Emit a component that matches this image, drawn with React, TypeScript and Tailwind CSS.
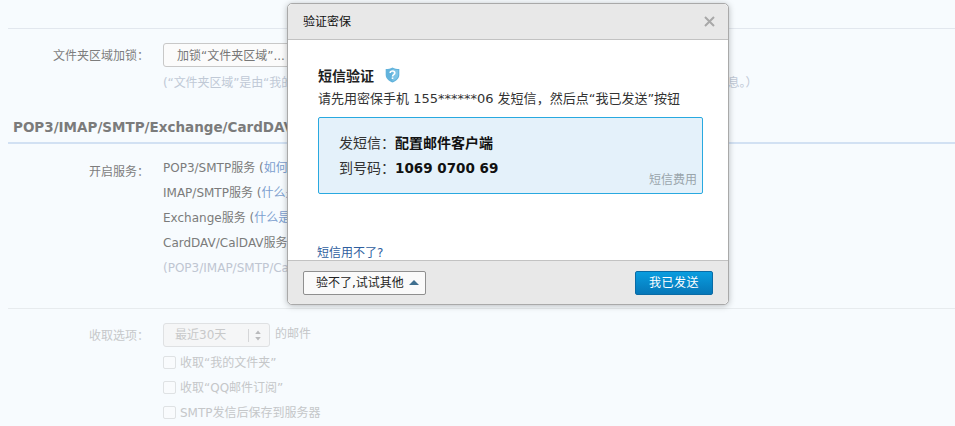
import React from "react";

const font = "font-['DejaVu_Sans','Noto_Sans_CJK_SC',sans-serif]";
const C = "\uFF1A";
const D = "\uFF0C";
const R = "\uFF09";

function Shield() {
  return (
    <svg width="15" height="16" viewBox="0 0 15 16" className="ml-[11px] -mt-[2px]">
      <path d="M7.5 0.5 C9.5 1.6 11.8 2 14.3 2 L14.3 8 C14.3 11.6 11 14.2 7.5 15.6 C4 14.2 0.7 11.6 0.7 8 L0.7 2 C3.2 2 5.5 1.6 7.5 0.5 Z" fill="#62b3dc" />
      <path d="M7.5 1.8 C9.3 2.7 11.3 3 13.2 3.1 L13.2 8 C13.2 10.8 10.4 13 7.5 14.3 Z" fill="#8accea" opacity="0.7" />
      <path d="M5.2 6 C5.2 3.4 9.8 3.4 9.8 6 C9.8 7.6 7.5 7.6 7.5 9.4" fill="none" stroke="#ffffff" strokeWidth="1.6" />
      <rect x="6.7" y="10.4" width="1.6" height="1.6" fill="#ffffff" />
    </svg>
  );
}

function Check({ label }: { label: string }) {
  return (
    <div className="flex h-[25px] items-center">
      <span className="h-[13px] w-[13px] rounded-[2px] border border-[#dfe2e4] bg-[#f9fbfd]" />
      <span className="ml-[4px] text-[12px] text-[#c5c7c9]">{label}</span>
    </div>
  );
}

export default function App() {
  return (
    <div className={`${font} relative h-[426px] w-[955px] overflow-hidden bg-[#f7fbfe]`}>
      <div className="ml-2 pt-[28px]">
        <div className="h-px bg-[#e2e7ee]" />

        <div className="flex pt-[14px]">
          <div className="w-[141px] pt-[4px] text-right text-[12px] leading-[18px] text-[#7d7d7d]">文件夹区域加锁{C}</div>
          <div className="ml-[14px]">
            <div className="flex h-[24px] w-[160px] items-center rounded-[3px] border border-[#c8c8c8] bg-[#fbfbfb] pl-[13px] pt-[1px] text-[12px] text-[#777777]">加锁“文件夹区域”...</div>
            <div className="mt-[7px] whitespace-nowrap text-[12px] leading-[18px] tracking-[-0.1px] text-[#c0c9d6]">
              (“文件夹区域”是由“我的文件夹”中所有文件夹组成的区域{D}加锁后{D}打开区域需输入独立密码{D}保护邮件信息。{R}
            </div>
          </div>
        </div>

        <div className="mt-[25px] pl-[5px] text-[13.5px] font-bold leading-[20px] text-[#7b7b7b]">POP3/IMAP/SMTP/Exchange/CardDAV/CalDAV服务</div>
        <div className="mt-[5px] h-[2px] bg-[#d2e1f3]" />

        <div className="flex pt-[12px]">
          <div className="w-[141px] pt-[7px] text-right text-[12px] leading-[18px] text-[#7d7d7d]">开启服务{C}</div>
          <div className="ml-[14px] whitespace-nowrap text-[12px] leading-[25px] text-[#7b7b7b]">
            <div>POP3/SMTP服务 (<span className="text-[#7d9fcf]">如何使用</span>)</div>
            <div>IMAP/SMTP服务 (<span className="text-[#7d9fcf]">什么是</span>)</div>
            <div>Exchange服务 (<span className="text-[#7d9fcf]">什么是</span>)</div>
            <div>CardDAV/CalDAV服务</div>
            <div className="text-[#bfc6d2]">(POP3/IMAP/SMTP/CardDAV)</div>
          </div>
        </div>

        <div className="mt-[27px] h-px bg-[#e7ebee]" />

        <div className="flex pt-[14px]">
          <div className="w-[141px] pt-[4px] text-right text-[12px] leading-[18px] text-[#c6c8ca]">收取选项{C}</div>
          <div className="ml-[14px]">
            <div className="flex items-center">
              <div className="flex h-[24px] w-[107px] items-center rounded-[3px] border border-[#dfe1e3] bg-[#f5f6f7] pl-[11px] text-[12px] text-[#c8c9ca]">
                <span className="w-[73px]">最近30天</span>
                <span className="h-[13px] w-px bg-[#d5d6d8]" />
                <svg width="6" height="11" viewBox="0 0 6 11" className="ml-[6px]">
                  <path d="M3 0.5 L5.8 4 L0.2 4 Z M3 10.5 L5.8 7 L0.2 7 Z" fill="#b9babc" />
                </svg>
              </div>
              <span className="ml-[5px] -mt-[3px] text-[12px] text-[#c5c7c9]">的邮件</span>
            </div>
            <div className="mt-[3px]">
              <Check label="收取“我的文件夹”" />
              <Check label="收取“QQ邮件订阅”" />
              <Check label="SMTP发信后保存到服务器" />
            </div>
          </div>
        </div>
      </div>

      <div className="absolute left-[287px] top-[3px] flex h-[302px] w-[442px] flex-col rounded-[5px] border border-[#a9a9a9] bg-white shadow-[0_1px_6px_rgba(0,0,0,0.25)]">
        <div className="flex h-[36px] shrink-0 items-center justify-between rounded-t-[5px] border-b border-[#c2c2c2] bg-[#e8e8e8] pl-[15px] pr-[13px]">
          <span className="pt-[1px] text-[12px] text-[#111111]">验证密保</span>
          <svg width="11" height="11" viewBox="0 0 11 11">
            <path d="M1 1 L10 10 M10 1 L1 10" stroke="#a8a8a8" strokeWidth="2" />
          </svg>
        </div>
        <div className="min-h-0 flex-1 px-[30px]">
          <div className="mt-[26px] flex h-[20px] items-center text-[14px] font-bold leading-[20px] text-[#1f1f1f]">
            短信验证
            <Shield />
          </div>
          <div className="mt-[3px] whitespace-nowrap text-[13px] leading-[20px] text-[#333333]">
            请先用密保手机 155******06 发短信{D}然后点“我已发送”按钮
          </div>
          <div className="relative mt-[8px] h-[77px] w-[385px] rounded-[2px] border border-[#29a9e0] bg-[#e4f1fa] pl-[20px] pt-[13px] text-[14px] leading-[25px] text-[#333333]">
            <div>发短信{C}<b className="text-[#111111]">配置邮件客户端</b></div>
            <div>到号码{C}<b className="text-[13.5px] text-[#111111]">1069 0700 69</b></div>
            <span className="absolute bottom-[6px] right-[5px] text-[12px] leading-[14px] text-[#9aa5ab]">短信费用</span>
          </div>
          <div className="-ml-px mt-[51px] text-[12px] leading-[16px] text-[#2e5e9e]">短信用不了?</div>
        </div>
        <div className="flex h-[44px] shrink-0 items-center justify-between rounded-b-[5px] border-t border-[#c2c2c2] bg-[#e8e8e8] px-[15px]">
          <div className="flex h-[24px] w-[123px] items-center rounded-[2px] border border-[#8f8f8f] bg-[#fafafa] pl-[12px] text-[12px] text-[#222222]">
            验不了,试试其他
            <svg width="10" height="5" viewBox="0 0 10 5" className="ml-[5px]"><path d="M5 0 L10 5 L0 5 Z" fill="#3f6f8f" /></svg>
          </div>
          <div className="flex h-[24px] w-[78px] items-center justify-center rounded-[2px] border border-[#0a6ba5] bg-gradient-to-b from-[#0a9ddf] to-[#0677b8] text-[12px] tracking-[0.5px] text-white">我已发送</div>
        </div>
      </div>
    </div>
  );
}
